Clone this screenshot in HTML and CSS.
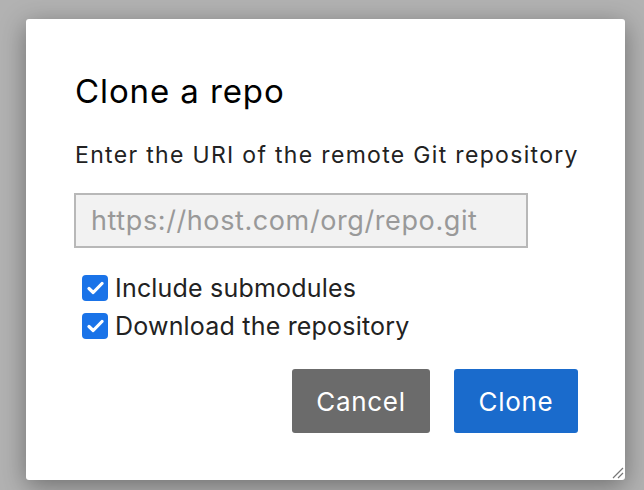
FILE: index.html
```html
<!DOCTYPE html>
<html lang="en">
<head>
    <meta charset="UTF-8">
    <meta name="viewport" content="width=device-width, initial-scale=1.0">
    <title>Clone a repo</title>
    <link rel="stylesheet" href="styles.css">
</head>
<body>
    <div class="backdrop">
        <!-- Диалог клонирования -->
        <div class="dialog">
            <h2 class="dialog-title">Clone a repo</h2>
            <p class="dialog-text">Enter the URI of the remote Git repository</p>

            <input class="uri-input" type="text" placeholder="https://host.com/org/repo.git">

            <div class="options">
                <label class="option">
                    <span class="check">
                        <svg width="17" height="14" viewBox="0 0 17 14"><path d="M2 7.5 L6.2 11.5 L15 2.5" fill="none" stroke="#fff" stroke-width="3.2" stroke-linecap="round" stroke-linejoin="round"/></svg>
                    </span>
                    Include submodules
                </label>
                <label class="option">
                    <span class="check">
                        <svg width="17" height="14" viewBox="0 0 17 14"><path d="M2 7.5 L6.2 11.5 L15 2.5" fill="none" stroke="#fff" stroke-width="3.2" stroke-linecap="round" stroke-linejoin="round"/></svg>
                    </span>
                    Download the repository
                </label>
            </div>

            <div class="actions">
                <button class="btn btn-cancel">Cancel</button>
                <button class="btn btn-clone">Clone</button>
            </div>

            <!-- Уголок для изменения размера -->
            <svg class="grip" width="14" height="14" viewBox="0 0 14 14">
                <path d="M3 13 L13 3 M8 13 L13 8" stroke="#777" stroke-width="1.2" fill="none"/>
            </svg>
        </div>
    </div>
</body>
</html>
```

FILE: styles.css
```css
body {
    margin: 0;
    font-family: 'Inter', 'Liberation Sans', sans-serif;
    background-color: #b2b2b2;
}
.backdrop {
    width: 644px;
    height: 490px;
    padding: 19px 0 0 26px;
    box-sizing: border-box;
    overflow: hidden;
}
.dialog {
    position: relative;
    width: 599px;
    height: 461px;
    box-sizing: border-box;
    padding: 48px 47px 47px 49px;
    background-color: #fff;
    border-radius: 3px;
    box-shadow: 0 6px 26px rgba(0, 0, 0, 0.38);
}
.dialog-title {
    margin: 4px 0 0;
    font-size: 33px;
    line-height: 40px;
    font-weight: 400;
    letter-spacing: 0.9px;
    color: #000;
}
.dialog-text {
    margin: 30px 0 0;
    font-size: 23px;
    line-height: 28px;
    letter-spacing: 1.32px;
    white-space: nowrap;
    color: #222;
}
.uri-input {
    display: block;
    margin: 24px 0 0 -1px;
    width: 454px;
    height: 55px;
    box-sizing: border-box;
    padding: 0 15px;
    border: 2px solid #b8b8b8;
    background-color: #f2f2f2;
    font-family: inherit;
    font-size: 27px;
    letter-spacing: 0.6px;
    color: #333;
    outline: none;
}
.uri-input::placeholder {
    color: #999;
}
.options {
    margin-top: 21px;
    display: flex;
    flex-direction: column;
}
.option {
    display: flex;
    align-items: center;
    height: 38px;
    padding-left: 7px;
    font-size: 25px;
    letter-spacing: 0.2px;
    color: #222;
}
.check {
    width: 26px;
    height: 26px;
    margin-right: 7px;
    border-radius: 4px;
    background-color: #1a73e8;
    display: flex;
    align-items: center;
    justify-content: center;
}
.actions {
    margin-top: 24px;
    display: flex;
    justify-content: flex-end;
    gap: 24px;
}
.btn {
    height: 64px;
    padding: 0;
    border: none;
    border-radius: 3px;
    color: #fff;
    font-family: inherit;
    font-size: 26px;
    letter-spacing: 0.7px;
}
.btn-cancel {
    width: 138px;
    background-color: #6b6b6b;
}
.btn-clone {
    width: 124px;
    background-color: #1a6bcc;
}
.grip {
    position: absolute;
    right: 1px;
    bottom: 1px;
}
```
